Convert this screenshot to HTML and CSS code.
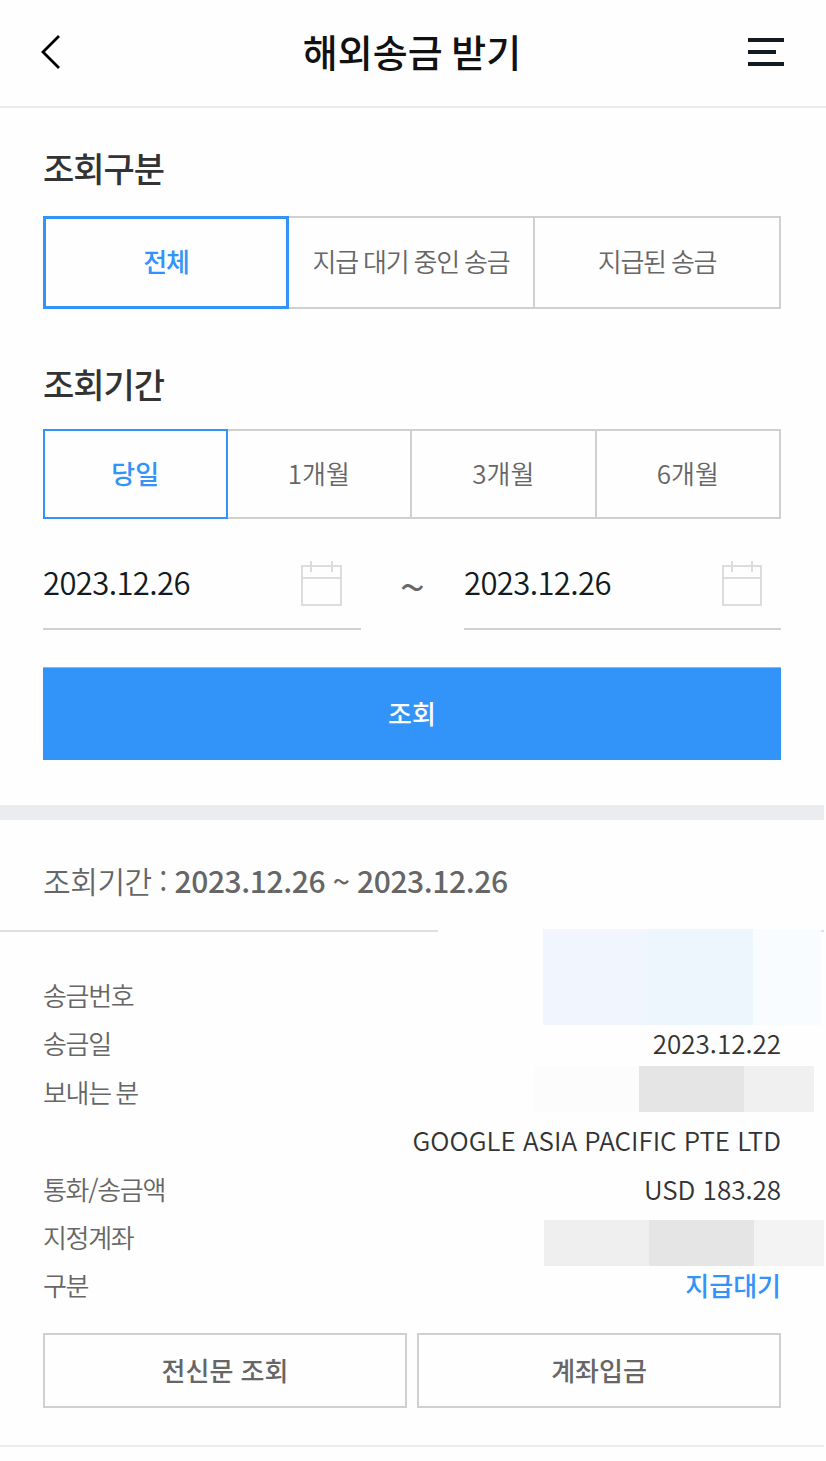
FILE: index.html
```html
<!DOCTYPE html>
<html lang="ko">

<head>
    <meta charset="UTF-8">
    <meta name="viewport" content="width=device-width, initial-scale=1.0">
    <title>해외송금 받기</title>
    <link rel="stylesheet" href="styles.css">
</head>

<body>
    <header class="header">
        <button type="button" class="icon-btn" aria-label="이전">
            <svg width="22" height="36" viewBox="0 0 22 36" fill="none" stroke="#000" stroke-width="2.8">
                <path d="M19 2L3 18L19 34" />
            </svg>
        </button>
        <h1>해외송금 받기</h1>
        <button type="button" class="icon-btn" aria-label="메뉴">
            <svg width="36" height="28" viewBox="0 0 36 28" fill="#131b22">
                <path d="M0 0h36v4H0zM0 12h28v4H0zM0 24h36v4H0z" />
            </svg>
        </button>
    </header>

    <section class="search">
        <h2>조회구분</h2>
        <div class="tabs tabs-type">
            <button type="button" class="tab active">전체</button>
            <button type="button" class="tab">지급 대기 중인 송금</button>
            <button type="button" class="tab">지급된 송금</button>
        </div>

        <h2>조회기간</h2>
        <div class="tabs tabs-period">
            <button type="button" class="tab active">당일</button>
            <button type="button" class="tab">1개월</button>
            <button type="button" class="tab">3개월</button>
            <button type="button" class="tab">6개월</button>
        </div>

        <div class="date-row">
            <div class="date-field">
                <span class="date">2023.12.26</span>
                <svg class="calendar" width="42" height="46" viewBox="0 0 42 46" fill="none" stroke="#dcdcdc" stroke-width="2">
                    <path d="M1 5h39v39H1zM1 17h39M10 0v11M31 0v11" />
                </svg>
            </div>
            <span class="tilde">~</span>
            <div class="date-field">
                <span class="date">2023.12.26</span>
                <svg class="calendar" width="41" height="46" viewBox="0 0 41 46" fill="none" stroke="#dcdcdc" stroke-width="2">
                    <path d="M1 5h38v39H1zM1 17h38M10 0v11M30 0v11" />
                </svg>
            </div>
        </div>

        <button type="button" class="submit">조회</button>
    </section>

    <section class="result">
        <p class="period">조회기간 : <strong>2023.12.26 ~ 2023.12.26</strong></p>

        <div class="item">
            <dl class="detail">
                <div class="row">
                    <dt>송금번호</dt>
                    <dd><span class="mask mask-number"><i></i><i></i><i></i><i></i></span></dd>
                </div>
                <div class="row">
                    <dt>송금일</dt>
                    <dd>2023.12.22</dd>
                </div>
                <div class="row">
                    <dt>보내는 분</dt>
                    <dd><span class="mask mask-sender"><i></i><i></i><i></i></span></dd>
                </div>
                <div class="row">
                    <dt></dt>
                    <dd class="company">GOOGLE ASIA PACIFIC PTE LTD</dd>
                </div>
                <div class="row">
                    <dt>통화/송금액</dt>
                    <dd>USD 183.28</dd>
                </div>
                <div class="row">
                    <dt>지정계좌</dt>
                    <dd><span class="mask mask-account"><i></i><i></i><i></i></span></dd>
                </div>
                <div class="row">
                    <dt>구분</dt>
                    <dd class="status">지급대기</dd>
                </div>
            </dl>
            <div class="actions">
                <button type="button">전신문 조회</button>
                <button type="button">계좌입금</button>
            </div>
        </div>
    </section>
</body>

</html>
```
FILE: styles.css
```css
* {
    box-sizing: border-box;
}

body {
    margin: 0;
    background: #fefefe;
    font-family: 'Noto Sans CJK KR', 'Noto Sans', sans-serif;
    font-size: 26px;
    font-weight: 350;
    color: #333;
}

button {
    margin: 0;
    padding: 0;
    border: none;
    border-radius: 0;
    background: none;
    font: inherit;
    color: inherit;
    letter-spacing: inherit;
    word-spacing: inherit;
}

h1,
h2,
p,
dl,
dd {
    margin: 0;
}

svg {
    display: block;
}

.header {
    display: flex;
    align-items: center;
    justify-content: space-between;
    height: 108px;
    padding: 0 42px 2px 40px;
    border-bottom: 2px solid #ebebeb;
}

.icon-btn {
    display: flex;
    width: 36px;
}

.header h1 {
    margin-top: -3px;
    font-size: 38px;
    font-weight: 500;
    line-height: 56px;
    word-spacing: -2px;
    color: #111;
}

/* search form */
.search {
    padding: 42px 45px 45px 43px;
}

h2 {
    font-size: 34px;
    font-weight: 500;
    line-height: 36px;
    letter-spacing: -1px;
}

.tabs {
    display: grid;
    grid-auto-flow: column;
    grid-auto-columns: minmax(0, 1fr);
}

.tab {
    padding-bottom: 4px;
    color: #666;
    border: 2px solid #d0d0d0;
    border-left: none;
}

.tab.active {
    color: #3293f9;
    font-weight: 500;
    border: 3px solid #3293f9;
}

.tabs-type {
    height: 93px;
    margin: 30px 0 57px;
    letter-spacing: -1.2px;
    word-spacing: -1px;
}

.tabs-period {
    height: 90px;
    margin-top: 27px;
}

.tabs-period .active {
    border-width: 2px;
}

.date-row {
    display: flex;
    justify-content: space-between;
    height: 111px;
}

.date-field {
    display: flex;
    justify-content: space-between;
    width: 318px;
    padding: 42px 18px 0 0;
    border-bottom: 2px solid #d0d0d0;
}

.date-field:last-child {
    width: 317px;
}

.date {
    margin-top: -1px;
    font-size: 31px;
    line-height: 44px;
    letter-spacing: -0.6px;
    color: #131b22;
}

.tilde {
    padding-top: 44px;
    font-size: 46px;
    line-height: 44px;
    color: #666;
}

.submit {
    display: block;
    width: 100%;
    height: 93px;
    margin-top: 37px;
    padding-bottom: 3px;
    background: #3293f9;
    border-top: 1px solid #8db8e4;
    color: #fff;
    font-weight: 500;
}

/* result list */
.result {
    margin-right: 2px;
    border-top: 15px solid #e9edef;
}

.period {
    height: 112px;
    padding: 38px 43px 0;
    border-bottom: 2px solid #dfdfdf;
    font-size: 30px;
    line-height: 44px;
    letter-spacing: -0.4px;
    word-spacing: -0.5px;
    color: #666;
}

.period strong {
    font-weight: 500;
}

.item {
    padding: 39px 43px 37px;
    border-bottom: 2px solid #ebebeb;
}

.row {
    display: flex;
    justify-content: space-between;
    height: 48.4px;
    line-height: 48px;
    position: relative;
}

dt {
    letter-spacing: -1.3px;
    word-spacing: -1.5px;
    color: #666;
}

.status {
    font-weight: 500;
    color: #3293f9;
}

/* hidden personal data */
.mask {
    position: absolute;
    display: flex;
}

.mask i {
    width: 105px;
}

.mask-number {
    top: -42px;
    right: -40px;
    height: 96px;
}

.mask-number i:nth-child(1) { background: #fefefe; }
.mask-number i:nth-child(2) { background: #f1f6fe; }
.mask-number i:nth-child(3) { background: #edf5fd; }
.mask-number i:nth-child(4) { background: #f8fcff; width: 68px; }

.mask-sender {
    top: -2px;
    right: -33px;
    height: 46px;
}

.mask-sender i:nth-child(1) { background: #fcfcfc; }
.mask-sender i:nth-child(2) { background: #e5e5e5; }
.mask-sender i:nth-child(3) { background: #f0f0f0; width: 70px; }

.mask-account {
    top: 7px;
    right: -43px;
    height: 46px;
}

.mask-account i:nth-child(1) { background: #efefef; }
.mask-account i:nth-child(2) { background: #e5e5e5; }
.mask-account i:nth-child(3) { background: #f3f3f3; width: 70px; }

.actions {
    display: flex;
    gap: 10px;
    margin-top: 23px;
}

.actions button {
    flex: 1;
    height: 75px;
    padding-bottom: 2px;
    border: 2px solid #d0d0d0;
    font-weight: 500;
    color: #666;
}
```
